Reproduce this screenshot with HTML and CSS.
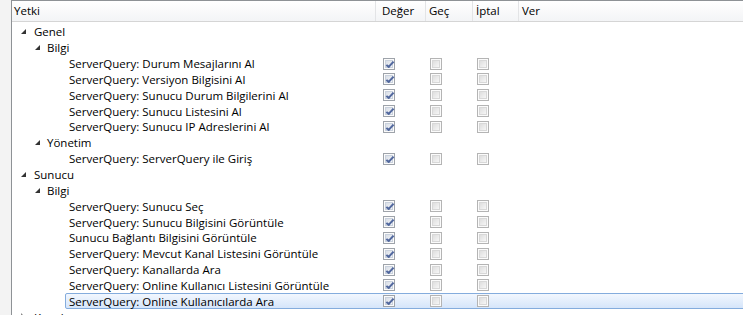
FILE: index.html
```html
<!DOCTYPE html>
<html>
<head>
  <title>Yetkiler</title>
  <link rel="stylesheet" href="styles.css">
</head>
<body>
  <div class="tree">
    <div class="head">
      <div class="hcell h-name">Yetki</div>
      <div class="hcell h-val">Değer</div>
      <div class="hcell h-skip">Geç</div>
      <div class="hcell h-neg">İptal</div>
      <div class="hcell h-grant">Ver</div>
    </div>

    <div class="rows">
      <div class="row l0"><div class="indent"><span class="twisty"></span></div><div class="item"><div class="label">Genel</div></div></div>
      <div class="row l1"><div class="indent"><span class="twisty"></span></div><div class="item"><div class="label">Bilgi</div></div></div>
      <div class="row l2"><div class="indent"></div><div class="item"><div class="label">ServerQuery: Durum Mesajlarını Al</div><div class="cell c-val"><span class="cb on"></span></div><div class="cell c-skip"><span class="cb"></span></div><div class="cell c-neg"><span class="cb"></span></div></div></div>
      <div class="row l2"><div class="indent"></div><div class="item"><div class="label">ServerQuery: Versiyon Bilgisini Al</div><div class="cell c-val"><span class="cb on"></span></div><div class="cell c-skip"><span class="cb"></span></div><div class="cell c-neg"><span class="cb"></span></div></div></div>
      <div class="row l2"><div class="indent"></div><div class="item"><div class="label">ServerQuery: Sunucu Durum Bilgilerini Al</div><div class="cell c-val"><span class="cb on"></span></div><div class="cell c-skip"><span class="cb"></span></div><div class="cell c-neg"><span class="cb"></span></div></div></div>
      <div class="row l2"><div class="indent"></div><div class="item"><div class="label">ServerQuery: Sunucu Listesini Al</div><div class="cell c-val"><span class="cb on"></span></div><div class="cell c-skip"><span class="cb"></span></div><div class="cell c-neg"><span class="cb"></span></div></div></div>
      <div class="row l2"><div class="indent"></div><div class="item"><div class="label">ServerQuery: Sunucu IP Adreslerini Al</div><div class="cell c-val"><span class="cb on"></span></div><div class="cell c-skip"><span class="cb"></span></div><div class="cell c-neg"><span class="cb"></span></div></div></div>
      <div class="row l1"><div class="indent"><span class="twisty"></span></div><div class="item"><div class="label">Yönetim</div></div></div>
      <div class="row l2"><div class="indent"></div><div class="item"><div class="label">ServerQuery: ServerQuery ile Giriş</div><div class="cell c-val"><span class="cb on"></span></div><div class="cell c-skip"><span class="cb"></span></div><div class="cell c-neg"><span class="cb"></span></div></div></div>
      <div class="row l0"><div class="indent"><span class="twisty"></span></div><div class="item"><div class="label">Sunucu</div></div></div>
      <div class="row l1"><div class="indent"><span class="twisty"></span></div><div class="item"><div class="label">Bilgi</div></div></div>
      <div class="row l2"><div class="indent"></div><div class="item"><div class="label">ServerQuery: Sunucu Seç</div><div class="cell c-val"><span class="cb on"></span></div><div class="cell c-skip"><span class="cb"></span></div><div class="cell c-neg"><span class="cb"></span></div></div></div>
      <div class="row l2"><div class="indent"></div><div class="item"><div class="label">ServerQuery: Sunucu Bilgisini Görüntüle</div><div class="cell c-val"><span class="cb on"></span></div><div class="cell c-skip"><span class="cb"></span></div><div class="cell c-neg"><span class="cb"></span></div></div></div>
      <div class="row l2"><div class="indent"></div><div class="item"><div class="label">Sunucu Bağlantı Bilgisini Görüntüle</div><div class="cell c-val"><span class="cb on"></span></div><div class="cell c-skip"><span class="cb"></span></div><div class="cell c-neg"><span class="cb"></span></div></div></div>
      <div class="row l2"><div class="indent"></div><div class="item"><div class="label">ServerQuery: Mevcut Kanal Listesini Görüntüle</div><div class="cell c-val"><span class="cb on"></span></div><div class="cell c-skip"><span class="cb"></span></div><div class="cell c-neg"><span class="cb"></span></div></div></div>
      <div class="row l2"><div class="indent"></div><div class="item"><div class="label">ServerQuery: Kanallarda Ara</div><div class="cell c-val"><span class="cb on"></span></div><div class="cell c-skip"><span class="cb"></span></div><div class="cell c-neg"><span class="cb"></span></div></div></div>
      <div class="row l2"><div class="indent"></div><div class="item"><div class="label">ServerQuery: Online Kullanıcı Listesini Görüntüle</div><div class="cell c-val"><span class="cb on"></span></div><div class="cell c-skip"><span class="cb"></span></div><div class="cell c-neg"><span class="cb"></span></div></div></div>
      <div class="row l2"><div class="indent"></div><div class="item selected"><div class="label">ServerQuery: Online Kullanıcılarda Ara</div><div class="cell c-val"><span class="cb on"></span></div><div class="cell c-skip"><span class="cb"></span></div><div class="cell c-neg"><span class="cb"></span></div></div></div>
      <div class="row l0"><div class="indent"><span class="twisty closed"></span></div><div class="item"><div class="label">Kanal</div></div></div>
    </div>
  </div>
</body>
</html>
```

FILE: styles.css
```css
html, body {
  margin: 0;
  height: 100%;
  overflow: hidden;
}
body {
  font-family: "Open Sans", "Noto Sans", sans-serif;
  font-size: 11.5px;
  color: #000;
  background: #f3f3f3;
}
.tree {
  margin-left: 11px;
  height: 100%;
  background: #fff;
  border-left: 1px solid #8e9296;
  border-top: 1px solid #8e9296;
  overflow: hidden;
}

/* header */
.head {
  display: flex;
  height: 20px;
  border-bottom: 1px solid #d5d5d5;
  background: linear-gradient(#ffffff, #f3f4f6);
}
.hcell {
  line-height: 19px;
  padding-left: 3px;
  border-right: 1px solid #e3e4e6;
  box-sizing: border-box;
}
.h-name { width: 364px; padding-left: 2px; }
.h-val { width: 50px; padding-left: 6px; }
.h-skip { width: 47px; }
.h-neg { width: 46px; }
.h-grant { flex: 1; border-right: none; }

/* rows */
.rows {
  padding-top: 2px;
}
.row {
  display: flex;
  height: 15.85px;
  line-height: 15px;
}
.indent {
  display: flex;
  align-items: center;
  box-sizing: border-box;
  flex: none;
}
.l0 .indent { width: 19px; padding-left: 9px; }
.l1 .indent { width: 32px; padding-left: 23px; }
.l2 .indent { width: 54px; }
.twisty {
  width: 0;
  height: 0;
  border-style: solid;
  border-width: 0 0 5px 5px;
  border-color: transparent transparent #333 transparent;
}
.twisty.closed {
  border-width: 4px 0 4px 4px;
  border-color: transparent transparent transparent #888;
}
.item {
  flex: 1;
  display: flex;
  align-items: center;
  box-sizing: border-box;
  border: 1px solid transparent;
  border-radius: 2px;
  margin-left: -1px;
  margin-right: -4px;
}
.item.selected {
  background: linear-gradient(#f2f7fe, #d5e5fa);
  border-color: #84acdd;
}
.label {
  box-sizing: border-box;
  padding-left: 3px;
  white-space: nowrap;
}
.l0 .label { width: 345px; }
.l1 .label { width: 332px; }
.l2 .label { width: 310px; }

.cell {
  display: flex;
  align-items: center;
  box-sizing: border-box;
}
.c-val { width: 50px; padding-left: 7px; }
.c-skip { width: 47px; padding-left: 4px; }
.c-neg { width: 46px; padding-left: 4px; }

/* disabled style checkboxes */
.cb {
  position: relative;
  width: 12px;
  height: 12px;
  box-sizing: border-box;
  border: 1px solid #b4b4b4;
  background: #fbfbfb;
}
.cb::before {
  content: "";
  position: absolute;
  left: 1px;
  top: 1px;
  right: 1px;
  bottom: 1px;
  border: 1px solid #d8d8d8;
  background: linear-gradient(135deg, #dedede, #f6f6f6);
}
.cb.on {
  border-color: #9ea3aa;
}
.cb.on::before {
  border-color: #c9d1dd;
  background: linear-gradient(135deg, #d9dee6, #f4f6f9);
}
.cb.on::after {
  content: "";
  position: absolute;
  left: 4px;
  top: 1px;
  width: 2px;
  height: 6px;
  border-right: 2px solid #52689e;
  border-bottom: 2px solid #52689e;
  transform: rotate(35deg) skewX(-8deg);
}
```
